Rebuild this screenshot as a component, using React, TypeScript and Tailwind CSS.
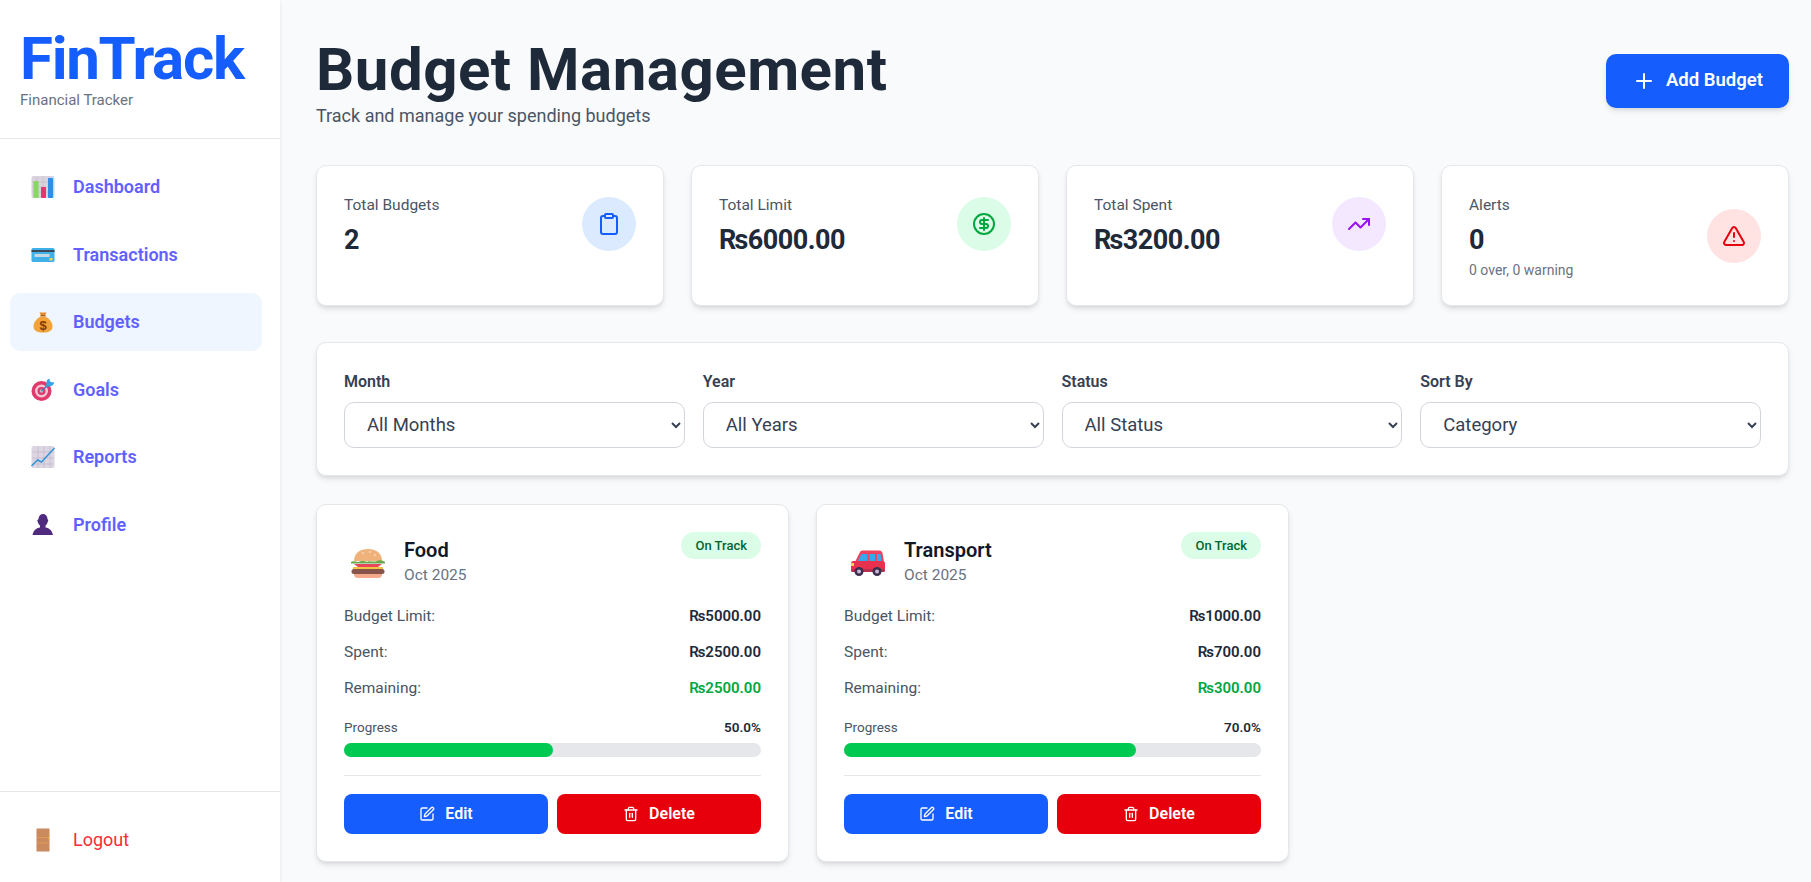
import { Clipboard, CircleDollarSign, TrendingUp, TriangleAlert, Plus, SquarePen, Trash2 } from "lucide-react";
import type { ReactNode } from "react";

const BarsEmoji = () => (
  <svg viewBox="0 0 24 24" className="h-6 w-6">
    <rect x="0.500" y="1" width="23" height="22" rx="2" fill="#d9d3de" />
    <path d="M1 7h22M1 12h22M1 17h22M6 2v20M12 2v20M18 2v20" stroke="#c2b9c9" strokeWidth="0.6" />
    <rect x="2.500" y="6" width="5" height="17" rx="0.800" fill="#86d860" />
    <rect x="10" y="12" width="5" height="11" rx="0.800" fill="#e8356f" />
    <rect x="17" y="3" width="5" height="20" rx="0.800" fill="#2f8fe0" />
  </svg>
);

const CardEmoji = () => (
  <svg viewBox="0 0 24 24" className="h-6 w-6">
    <rect x="0.500" y="5" width="23" height="14" rx="1.500" fill="#3fb0e8" />
    <rect x="0.500" y="7" width="23" height="2" fill="#3c4a5a" />
    <rect x="3.500" y="11" width="15" height="3" rx="0.500" fill="#c5d9e6" />
    <rect x="18.500" y="15" width="3" height="2.500" fill="#f8d24a" />
  </svg>
);

const BagEmoji = () => (
  <svg viewBox="0 0 24 24" className="h-6 w-6">
    <path d="M8.500 2.500h7l-1.500 3h-4z" fill="#e58a2b" />
    <rect x="9.500" y="5" width="5" height="1.500" fill="#a9611c" />
    <path d="M10 6.500h4c4.500 2 7.500 6 7.500 10 0 4-3.500 6-9.500 6s-9.500-2-9.500-6c0-4 3-8 7.500-10z" fill="#f2a33a" />
    <text x="12" y="19.500" textAnchor="middle" fontSize="13" fontWeight="700" fill="#7a3d10" fontFamily="Liberation Sans">$</text>
  </svg>
);

const TargetEmoji = () => (
  <svg viewBox="0 0 24 24" className="h-6 w-6">
    <circle cx="10.500" cy="13" r="10" fill="#e0396b" />
    <circle cx="10.500" cy="13" r="6.500" fill="#f3c6d6" />
    <circle cx="10.500" cy="13" r="4" fill="#e0396b" />
    <circle cx="10.500" cy="13" r="1.800" fill="#c8b8c8" />
    <path d="M10.500 13L20 4" stroke="#3c7fb8" strokeWidth="1.500" />
    <path d="M15 7l1-5 2.500-1.500.5 3.500 4.500.5-2 3-5 1.500z" fill="#37a3e6" />
  </svg>
);

const ChartEmoji = () => (
  <svg viewBox="0 0 24 24" className="h-6 w-6">
    <rect x="0.500" y="1" width="23" height="22" rx="2" fill="#dcd5e2" />
    <path d="M1 7h22M1 13h22M1 19h22M7 1v22M13 1v22M19 1v22" stroke="#bfb4c9" strokeWidth="0.6" />
    <path d="M0.500 21l6-6 4 2 13-14" fill="none" stroke="#2f95d8" strokeWidth="1.500" />
  </svg>
);

const PersonEmoji = () => (
  <svg viewBox="0 0 24 24" className="h-6 w-6">
    <path d="M7.500 6c0-3 2-5 4.500-5s4.500 2 4.500 5l.8 1.500-.8 2c-.5 1.500-1.200 2.500-2 3v2c4 .7 6.500 3 7.500 7.500H1.500c1-4.500 3.500-6.800 7.500-7.500v-2c-.8-.5-1.500-1.500-2-3l-.8-2z" fill="#4f2a7f" />
  </svg>
);

const DoorEmoji = () => (
  <svg viewBox="0 0 24 24" className="h-6 w-6">
    <rect x="5.500" y="0.500" width="13" height="23" rx="0.500" fill="#c98a5e" />
    <path d="M6 9.500h12M6 15h12" stroke="#e09a55" strokeWidth="1" />
    <circle cx="17.500" cy="10.500" r="0.700" fill="#f5a623" />
  </svg>
);

const BurgerEmoji = () => (
  <svg viewBox="0 0 36 32" className="mt-1 h-8 w-9">
    <path d="M4 14C4 6 10 2 18 2s14 4 14 12z" fill="#eeb27a" />
    <circle cx="13" cy="6" r="0.700" fill="#fff" />
    <circle cx="20" cy="5" r="0.700" fill="#fff" />
    <circle cx="25" cy="8" r="0.700" fill="#fff" />
    <path d="M1 15c3-2 6 1 9-0.500s6 1 8 0 6 1 9-0.500 6 0 8 1v1.500H1z" fill="#67a84d" />
    <path d="M4 17h28l-4 3H8z" fill="#e8465c" />
    <rect x="3" y="20" width="30" height="2.500" fill="#f5c53f" />
    <rect x="1.500" y="22" width="33" height="5" rx="2.500" fill="#86544a" />
    <path d="M4 27h28v1c0 2-2 3-4 3H8c-2 0-4-1-4-3z" fill="#f3a98c" />
  </svg>
);

const CarEmoji = () => (
  <svg viewBox="0 0 36 32" className="mt-1 h-8 w-9">
    <path d="M10 5c.5-1 1.500-1.500 3-1.500h16c2 0 3 1 3.500 2.500l1.500 9H5z" fill="#f0425a" />
    <path d="M11.500 7h6v7.500H7.500zM19.500 7h5.500v7.500h-5.500zM27 7h3.500l1.200 7.500H27z" fill="#35a8f0" />
    <rect x="1" y="14" width="34" height="10" rx="2.500" fill="#e8304f" />
    <rect x="1" y="16" width="3" height="3" fill="#f8d24a" />
    <rect x="1" y="22" width="34" height="3" rx="1.500" fill="#b8304f" />
    <circle cx="9" cy="24.500" r="4.500" fill="#3c2f50" />
    <circle cx="27" cy="24.500" r="4.500" fill="#3c2f50" />
    <circle cx="9" cy="24.500" r="2" fill="#c9b8d8" />
    <circle cx="27" cy="24.500" r="2" fill="#c9b8d8" />
  </svg>
);

const navItems: { label: string; icon: ReactNode; active?: boolean }[] = [
  { label: "Dashboard", icon: <BarsEmoji /> },
  { label: "Transactions", icon: <CardEmoji /> },
  { label: "Budgets", icon: <BagEmoji />, active: true },
  { label: "Goals", icon: <TargetEmoji /> },
  { label: "Reports", icon: <ChartEmoji /> },
  { label: "Profile", icon: <PersonEmoji /> },
];

function StatCard({
  label,
  value,
  sub,
  circle,
  icon,
}: {
  label: string;
  value: string;
  sub?: string;
  circle: string;
  icon: ReactNode;
}) {
  return (
    <div className="rounded-[10px] border border-gray-200 bg-white p-[27px] shadow-md">
      <div className="flex items-center justify-between">
        <div>
          <p className="text-[15.5px] leading-6 text-gray-600">{label}</p>
          <p className="mt-1 mb-[-4px] text-[27px] leading-[38px] font-bold tracking-[-0.5px] text-gray-800">{value}</p>
          {sub && <p className="mt-[7px] text-sm leading-4 text-gray-500">{sub}</p>}
        </div>
        <div className={`flex h-[54px] w-[54px] items-center justify-center rounded-full ${circle}`}>
          {icon}
        </div>
      </div>
    </div>
  );
}

function Filter({ label, options }: { label: string; options: string[] }) {
  return (
    <div>
      <label className="mb-2 block text-base leading-6 font-semibold text-gray-700">{label}</label>
      <select className="h-[46px] w-full rounded-[10px] border border-gray-300 bg-white px-[18px] text-[18.5px] text-gray-700">
        {options.map((o) => (
          <option key={o}>{o}</option>
        ))}
      </select>
    </div>
  );
}

function Row({ label, value, color }: { label: string; value: string; color: string }) {
  return (
    <div className="flex h-9 items-baseline justify-between text-[15.5px] leading-9">
      <span className="text-gray-600">{label}</span>
      <span className={`text-[15px] font-semibold ${color}`}>{value}</span>
    </div>
  );
}

function BudgetCard({
  emoji,
  name,
  limit,
  spent,
  remaining,
  percent,
}: {
  emoji: ReactNode;
  name: string;
  limit: string;
  spent: string;
  remaining: string;
  percent: number;
}) {
  return (
    <div className="rounded-[10px] border border-gray-200 bg-white p-[27px] shadow-md">
      <div className="flex items-start justify-between">
        <div className="flex items-center gap-[18px] pt-1 pl-1.5">
          {emoji}
          <div>
            <h3 className="text-xl leading-7 font-semibold text-gray-900">{name}</h3>
            <p className="text-[15.5px] leading-[22px] text-gray-500">Oct 2025</p>
          </div>
        </div>
        <span className="rounded-full bg-green-100 px-3.5 py-1 text-[13px] leading-[19px] font-medium text-green-800">
          On Track
        </span>
      </div>
      <div className="mt-3">
        <Row label="Budget Limit:" value={limit} color="text-gray-800" />
        <Row label="Spent:" value={spent} color="text-gray-800" />
        <Row label="Remaining:" value={remaining} color="text-green-600" />
      </div>
      <div className="mt-[11px] flex justify-between text-[13.5px] leading-5">
        <span className="text-gray-600">Progress</span>
        <span className="font-semibold text-gray-800">{percent.toFixed(1)}%</span>
      </div>
      <div className="mt-[6px] h-3.5 rounded-full bg-gray-200">
        <div className="h-3.5 rounded-full bg-green-500" style={{ width: `${percent}%` }} />
      </div>
      <div className="mt-[18px] flex gap-[9px] border-t border-gray-200 pt-[18px]">
        <button className="flex h-10 flex-1 items-center justify-center gap-2.5 rounded-lg bg-blue-600 text-base font-semibold text-white">
          <SquarePen size={16} />
          Edit
        </button>
        <button className="flex h-10 flex-1 items-center justify-center gap-2.5 rounded-lg bg-red-600 text-base font-semibold text-white">
          <Trash2 size={16} />
          Delete
        </button>
      </div>
    </div>
  );
}

export default function App() {
  return (
    <div className="flex h-[882px] overflow-hidden bg-gray-50 font-['Roboto','Noto_Sans',sans-serif]">
      <aside className="flex w-[280px] shrink-0 flex-col bg-white shadow-sm">
        <div className="h-[139px] border-b border-gray-200 px-5 pt-7">
          <h1 className="text-6xl leading-[61px] font-bold tracking-[-1.3px] text-blue-600">FinTrack</h1>
          <p className="text-[15px] leading-[22px] text-gray-500">Financial Tracker</p>
        </div>
        <nav className="flex flex-1 flex-col gap-[9.500px] pt-[19px] pr-[18px] pl-2.5">
          {navItems.map((item) => (
            <a
              key={item.label}
              className={`flex h-[58px] items-center gap-[18px] rounded-[10px] px-[21px] text-lg font-semibold text-indigo-500 ${
                item.active ? "bg-blue-50" : ""
              }`}
            >
              {item.icon}
              {item.label}
            </a>
          ))}
        </nav>
        <div className="h-[91px] border-t border-gray-200 px-2.5 pt-[19px]">
          <a className="flex h-[58px] items-center gap-[18px] px-[21px] text-lg text-red-500">
            <DoorEmoji />
            Logout
          </a>
        </div>
      </aside>
      <main className="flex-1 pt-[38px] pr-[22px] pl-9">
        <div className="flex items-start justify-between">
          <div>
            <h2 className="text-6xl leading-[64px] font-bold tracking-[0.5px] text-gray-800">Budget Management</h2>
            <p className="text-lg leading-7 text-gray-600">Track and manage your spending budgets</p>
          </div>
          <button className="mt-4 flex h-[54px] w-[183px] items-center justify-center gap-2.5 rounded-[10px] bg-blue-600 text-[18.5px] font-semibold text-white shadow-md">
            <Plus size={24} />
            Add Budget
          </button>
        </div>
        <div className="mt-[35px] grid grid-cols-4 gap-[27px]">
          <StatCard label="Total Budgets" value="2" circle="bg-blue-100" icon={<Clipboard size={24} className="text-blue-600" />} />
          <StatCard label="Total Limit" value="₨6000.00" circle="bg-green-100" icon={<CircleDollarSign size={24} className="text-green-600" />} />
          <StatCard label="Total Spent" value="₨3200.00" circle="bg-purple-100" icon={<TrendingUp size={24} className="text-purple-600" />} />
          <StatCard label="Alerts" value="0" sub="0 over, 0 warning" circle="bg-red-100" icon={<TriangleAlert size={24} className="text-red-600" />} />
        </div>
        <div className="mt-9 grid grid-cols-4 gap-[18px] rounded-[10px] border border-gray-200 bg-white p-[27px] shadow-md">
          <Filter label="Month" options={["All Months"]} />
          <Filter label="Year" options={["All Years"]} />
          <Filter label="Status" options={["All Status"]} />
          <Filter label="Sort By" options={["Category"]} />
        </div>
        <div className="mt-7 grid grid-cols-3 gap-[27px]">
          <BudgetCard emoji={<BurgerEmoji />} name="Food" limit="₨5000.00" spent="₨2500.00" remaining="₨2500.00" percent={50} />
          <BudgetCard emoji={<CarEmoji />} name="Transport" limit="₨1000.00" spent="₨700.00" remaining="₨300.00" percent={70} />
        </div>
      </main>
    </div>
  );
}
